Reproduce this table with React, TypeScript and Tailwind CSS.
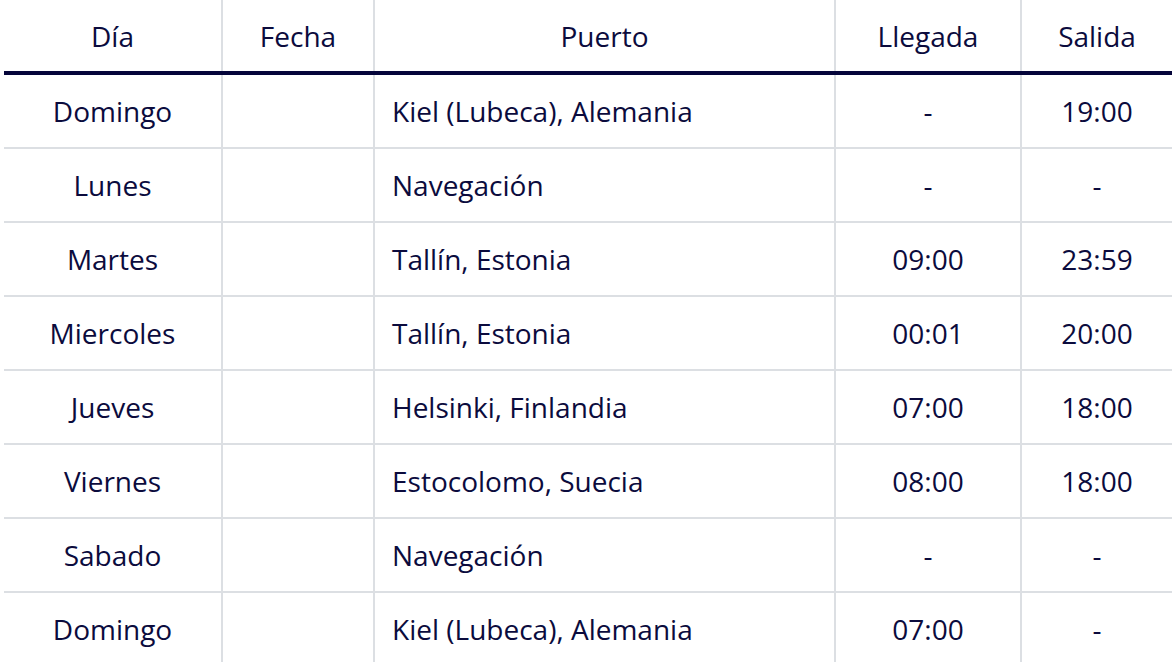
import React from "react";

const rows: [string, string, string, string, string][] = [
  ["Domingo", "", "Kiel (Lubeca), Alemania", "-", "19:00"],
  ["Lunes", "", "Navegación", "-", "-"],
  ["Martes", "", "Tallín, Estonia", "09:00", "23:59"],
  ["Miercoles", "", "Tallín, Estonia", "00:01", "20:00"],
  ["Jueves", "", "Helsinki, Finlandia", "07:00", "18:00"],
  ["Viernes", "", "Estocolomo, Suecia", "08:00", "18:00"],
  ["Sabado", "", "Navegación", "-", "-"],
  ["Domingo", "", "Kiel (Lubeca), Alemania", "07:00", "-"],
];

const cellBase = "flex items-center border-r-2 border-[#dcdfe3]";

export default function App() {
  return (
    <div
      className="w-[1172px] h-[662px] overflow-hidden bg-white pl-[4px] text-[#0b0b3d]"
      style={{ fontFamily: '"Open Sans", "Noto Sans", sans-serif' }}
    >
      <div className="flex flex-col w-[1168px] text-[28px] leading-none">
        <div className="flex h-[75px] border-b-4 border-[#05053a]">
          <div className={`${cellBase} w-[219px] justify-center`}>Día</div>
          <div className={`${cellBase} w-[152px] justify-center`}>Fecha</div>
          <div className={`${cellBase} w-[461px] justify-center`}>Puerto</div>
          <div className={`${cellBase} w-[186px] justify-center`}>Llegada</div>
          <div className="flex items-center justify-center w-[150px]">Salida</div>
        </div>
        {rows.map((r, i) => (
          <div key={i} className="flex h-[74px] border-b-2 border-[#dcdfe3]">
            <div className={`${cellBase} w-[219px] justify-center`}>{r[0]}</div>
            <div className={`${cellBase} w-[152px] justify-center`}>{r[1]}</div>
            <div className={`${cellBase} w-[461px] justify-start pl-[17px]`}>{r[2]}</div>
            <div className={`${cellBase} w-[186px] justify-center`}>{r[3]}</div>
            <div className="flex items-center justify-center w-[150px]">{r[4]}</div>
          </div>
        ))}
      </div>
    </div>
  );
}
